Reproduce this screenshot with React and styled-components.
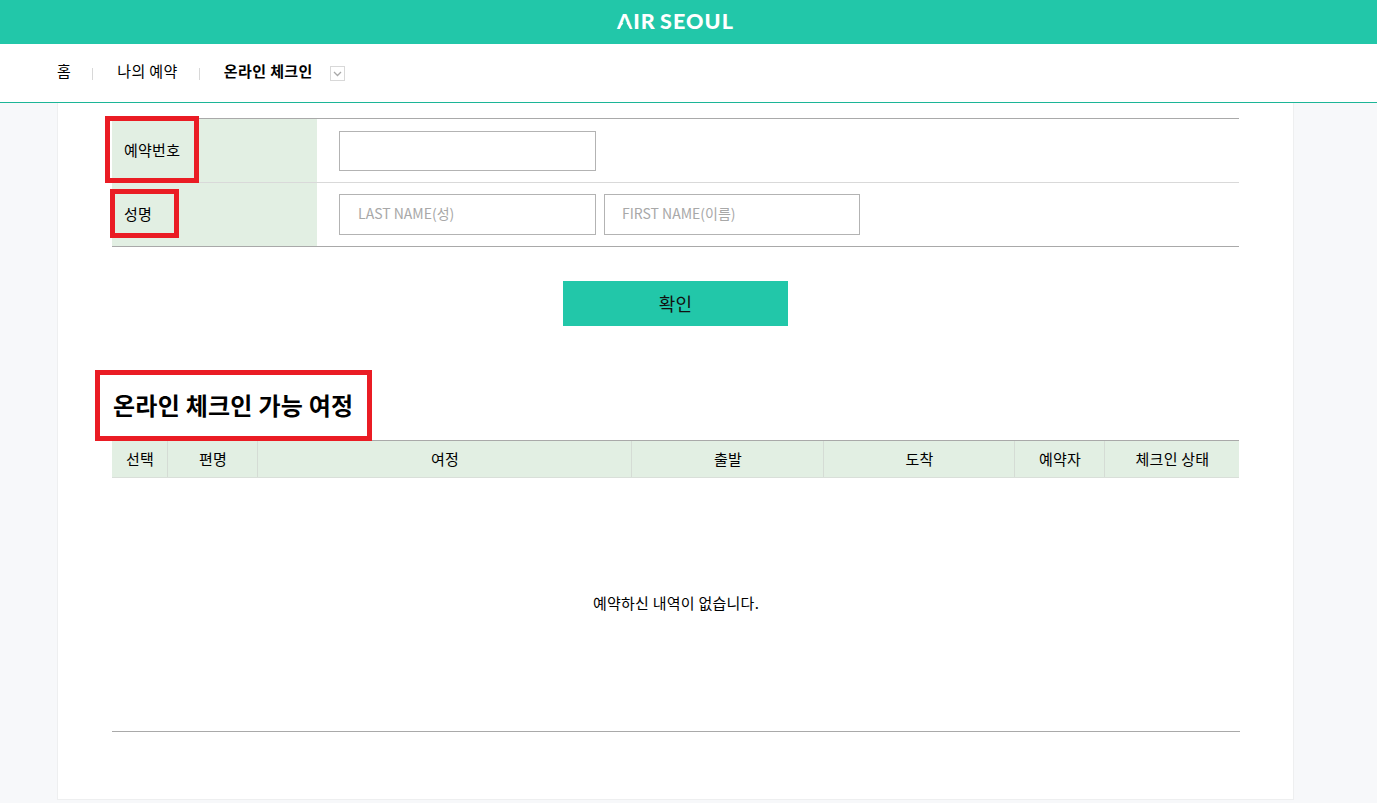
import React from 'react'
import styled, { createGlobalStyle } from 'styled-components'

const GlobalStyle = createGlobalStyle`
  html, body {
    margin: 0;
    padding: 0;
    background: #f7f8fa;
    font-family: "Noto Sans CJK KR", "Noto Sans", sans-serif;
    color: #000;
    overflow: hidden;
  }
  * { box-sizing: border-box; }
`

const columns = [
  { label: '선택', width: 55 },
  { label: '편명', width: 90 },
  { label: '여정', width: 374 },
  { label: '출발', width: 192 },
  { label: '도착', width: 191 },
  { label: '예약자', width: 90 },
  { label: '체크인 상태', width: 135 },
]

function App() {
  return (
    <Wrap>
      <GlobalStyle />
      <TopBar>
        <Logo><LogoA>A</LogoA>IR SEOUL</Logo>
      </TopBar>
      <Nav>
        <NavItem>홈</NavItem>
        <NavDivider />
        <NavItem>나의 예약</NavItem>
        <NavDivider />
        <NavItem $current>온라인 체크인</NavItem>
        <NavToggle>
          <svg width="9" height="6" viewBox="0 0 9 6" fill="none">
            <path d="M1 1l3.5 3.5L8 1" stroke="#a9a9a9" strokeWidth="1.3" />
          </svg>
        </NavToggle>
      </Nav>
      <Card>
        <FormTable>
          <FormRow>
            <FormLabel>예약번호</FormLabel>
            <FormField>
              <TextInput $short />
            </FormField>
          </FormRow>
          <FormRow>
            <FormLabel>성명</FormLabel>
            <FormField>
              <TextInput placeholder="LAST NAME(성)" />
              <TextInput placeholder="FIRST NAME(이름)" />
            </FormField>
          </FormRow>
        </FormTable>
        <ButtonRow>
          <ConfirmButton>확인</ConfirmButton>
        </ButtonRow>
        <SectionTitle>온라인 체크인 가능 여정</SectionTitle>
        <HeadRow>
          {columns.map((col) => (
            <HeadCell key={col.label} $width={col.width}>{col.label}</HeadCell>
          ))}
        </HeadRow>
        <EmptyRow>예약하신 내역이 없습니다.</EmptyRow>
        <Mark $left={105} $top={116} $width={94} $height={67} />
        <Mark $left={110} $top={189} $width={69} $height={49} />
        <Mark $left={95} $top={370} $width={277} $height={71} />
      </Card>
    </Wrap>
  )
}

export default App

const Wrap = styled.div`
  position: relative;
  width: 1377px;
  height: 803px;
  overflow: hidden;
`
const TopBar = styled.div`
  height: 44px;
  padding: 0 26px 2px 0;
  background: #22c7a9;
  display: flex;
  justify-content: center;
  align-items: center;
`
const Logo = styled.span`
  font-family: "Lato", sans-serif;
  font-weight: 900;
  font-size: 21.5px;
  letter-spacing: 1.1px;
  word-spacing: -2px;
  color: #fff;
  line-height: 42px;
`
/* the logo's A has no crossbar: a small teal wedge covers it */
const LogoA = styled.span`
  position: relative;
  display: inline-block;
  &::after {
    content: '';
    position: absolute;
    left: 3px;
    bottom: 13px;
    width: 10px;
    height: 9px;
    background: #22c7a9;
    clip-path: polygon(50% 0, 100% 100%, 0 100%);
  }
`
const Nav = styled.div`
  height: 59px;
  background: #fff;
  border-bottom: 1px solid #1cb597;
  display: flex;
  align-items: center;
  padding: 0 0 4px 57px;
`
const NavItem = styled.span`
  font-size: 15px;
  letter-spacing: 0.4px;
  line-height: 20px;
  font-weight: ${(p) => (p.$current ? 700 : 400)};
`
const NavDivider = styled.i`
  width: 1px;
  height: 12px;
  margin: 5px 24px 0 21px;
  background: #d8d8d8;
`
const NavToggle = styled.span`
  width: 15px;
  height: 15px;
  margin: 5px 0 0 17px;
  border: 1px solid #d8d8d8;
  display: flex;
  align-items: center;
  justify-content: center;
`
const Card = styled.div`
  position: relative;
  width: 1237px;
  height: 697px;
  margin-left: 57px;
  padding: 15px 54px 0 54px;
  background: #fff;
  border: 1px solid #eeeff0;
  border-top: 0;
`
const FormTable = styled.div`
  border-top: 1px solid #a9a9a9;
  border-bottom: 1px solid #a9a9a9;
`
const FormRow = styled.div`
  display: flex;
  height: 63px;
  & + & {
    height: 64px;
    border-top: 1px solid #d9d9d9;
  }
`
const FormLabel = styled.div`
  width: 205px;
  padding: 0 0 3px 12px;
  background: #e2efe3;
  display: flex;
  align-items: center;
  font-size: 15px;
  letter-spacing: 0.25px;
`
const FormField = styled.div`
  display: flex;
  align-items: center;
  gap: 8px;
  padding-left: 22px;
`
const TextInput = styled.input`
  width: 257px;
  height: ${(p) => (p.$short ? 40 : 41)}px;
  margin-top: ${(p) => (p.$short ? 1 : 0)}px;
  padding: 0 17px 3px 18px;
  border: 1px solid #b3b3b3;
  background: #fff;
  font-family: inherit;
  font-size: 14px;
  outline: none;
  &::placeholder {
    color: #a8a8a8;
    opacity: 1;
  }
  & + & {
    width: 256px;
    padding-left: 17px;
  }
`
const ButtonRow = styled.div`
  display: flex;
  justify-content: center;
  margin-top: 34px;
`
const ConfirmButton = styled.button`
  width: 225px;
  height: 45px;
  padding: 0 0 2px;
  border: 0;
  background: #22c7a9;
  color: #111;
  font-family: inherit;
  font-size: 18px;
  letter-spacing: 0.3px;
  cursor: pointer;
`
const SectionTitle = styled.h2`
  margin: 0;
  height: 114px;
  padding: 61px 0 0 1px;
  font-size: 24px;
  letter-spacing: 0.25px;
  line-height: 36px;
  font-weight: 700;
`
const HeadRow = styled.div`
  display: flex;
  height: 38px;
  background: #e2efe3;
  border-top: 1px solid #a9a9a9;
  border-bottom: 1px solid #d9dfd9;
`
const HeadCell = styled.div`
  flex: 0 0 ${(p) => p.$width}px;
  padding: 0 0 2px 1px;
  display: flex;
  align-items: center;
  justify-content: center;
  font-size: 15px;
  letter-spacing: 0.25px;
  & + & {
    border-left: 1px solid #d5dcd5;
  }
`
const EmptyRow = styled.div`
  width: 1128px;
  height: 254px;
  padding-bottom: 4px;
  border-bottom: 1px solid #a9a9a9;
  display: flex;
  align-items: center;
  justify-content: center;
  font-size: 15px;
  letter-spacing: 0.25px;
`
const Mark = styled.div`
  position: absolute;
  left: ${(p) => p.$left - 58}px;
  top: ${(p) => p.$top - 103}px;
  width: ${(p) => p.$width}px;
  height: ${(p) => p.$height}px;
  border: 5px solid #ea1c24;
`
